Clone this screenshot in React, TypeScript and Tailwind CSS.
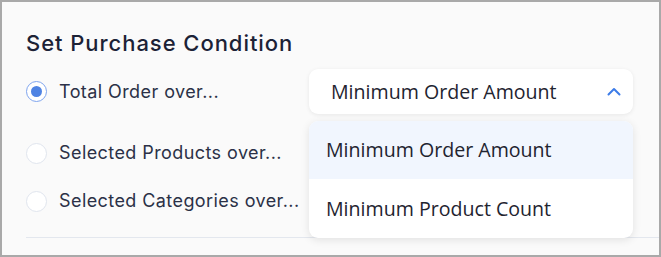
import React from "react";

function Radio({ checked }: { checked?: boolean }) {
  return checked ? (
    <span className="flex h-[21px] w-[21px] shrink-0 items-center justify-center rounded-full border-[1.5px] border-[#7ea4ee] bg-white">
      <span className="h-[11px] w-[11px] rounded-full bg-[#4f83e3]" />
    </span>
  ) : (
    <span className="h-[21px] w-[21px] shrink-0 rounded-full border-[1.5px] border-[#e0e5ee] bg-white" />
  );
}

function Chevron() {
  return (
    <svg width="14" height="9" viewBox="0 0 14 9" fill="none">
      <path d="M1.5 7.5L7 2L12.5 7.5" stroke="#3d7ce8" strokeWidth="2" strokeLinecap="round" strokeLinejoin="round" />
    </svg>
  );
}

export default function App() {
  const label = "text-[18px] leading-6 tracking-[0.42px] text-[#2b3147] font-['Inter',sans-serif]";
  const opt = "font-['Open_Sans',sans-serif] text-[19.6px] text-[#1f2430]";
  return (
    <div className="h-[257px] w-[661px] border-2 border-[#a9a9a9] bg-[#fafafa]">
      <div className="relative flex h-full flex-col pl-[24px] pt-[26px]">
        <h1 className="font-['Inter',sans-serif] text-[22px] font-medium leading-[30px] tracking-[0.95px] text-[#1c2236]">
          Set Purchase Condition
        </h1>
        <div className="mt-[11px] flex h-[45px] items-center justify-between pr-[26px]">
          <div className="flex items-center gap-[12px]">
            <Radio checked />
            <span className={label}>Total Order over...</span>
          </div>
          <div className="flex h-[45px] w-[324px] items-center justify-between rounded-[9px] bg-white pl-[22px] pr-[12px] shadow-[0_1px_4px_rgba(0,0,0,0.08)]">
            <span className={opt}>Minimum Order Amount</span>
            <Chevron />
          </div>
        </div>
        <div className="mt-[27px] flex items-center gap-[12px]">
          <Radio />
          <span className={label}>Selected Products over...</span>
        </div>
        <div className="mt-[24px] flex items-center gap-[12px]">
          <Radio />
          <span className={label}>Selected Categories over...</span>
        </div>
        <div className="mt-[24px] h-px bg-[#e3e7ee]" />
        <div className="absolute left-[307px] top-[119px] w-[324px] overflow-hidden rounded-[9px] bg-white shadow-[0_2px_8px_rgba(0,0,0,0.10)]">
          <div className={`flex h-[58px] items-center bg-[#f1f6fe] pl-[17px] ${opt}`}>Minimum Order Amount</div>
          <div className={`flex h-[59px] items-center pl-[17px] ${opt}`}>Minimum Product Count</div>
        </div>
      </div>
    </div>
  );
}
